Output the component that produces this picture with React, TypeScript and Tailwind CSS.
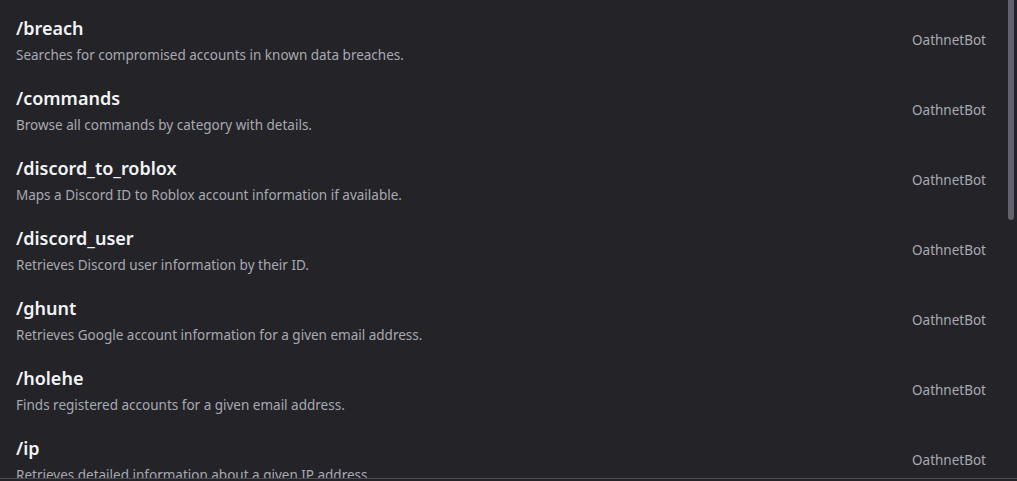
import React from "react";

const rows = [
  { name: "/breach", desc: "Searches for compromised accounts in known data breaches." },
  { name: "/commands", desc: "Browse all commands by category with details." },
  { name: "/discord_to_roblox", desc: "Maps a Discord ID to Roblox account information if available." },
  { name: "/discord_user", desc: "Retrieves Discord user information by their ID." },
  { name: "/ghunt", desc: "Retrieves Google account information for a given email address." },
  { name: "/holehe", desc: "Finds registered accounts for a given email address." },
  { name: "/ip", desc: "Retrieves detailed information about a given IP address." },
];

export default function App() {
  return (
    <div className="w-[1017px] h-[481px] bg-[#232328] overflow-hidden" style={{ fontFamily: '"Noto Sans", "Open Sans", sans-serif' }}>
      <div className="relative h-[479px] overflow-hidden border-b border-[#4b4b55]">
        <div className="pt-[5px] pr-[31px]">
          {rows.map((r) => (
            <div key={r.name} className="h-[70px] flex items-center justify-between pl-4">
              <div className="flex flex-col gap-[6px]">
                <div className="text-[18px] leading-[24px] font-semibold text-[#f2f3f5]">{r.name}</div>
                <div className="text-[13.5px] leading-[18px] text-[#a9a9b2]">{r.desc}</div>
              </div>
              <div className="text-[13.5px] leading-[18px] text-[#a9a9b2]">OathnetBot</div>
            </div>
          ))}
        </div>
        <div className="absolute right-[3px] top-0 w-[6px] h-[220px] rounded-b-[3px] bg-[#62626e]" />
      </div>
    </div>
  );
}
